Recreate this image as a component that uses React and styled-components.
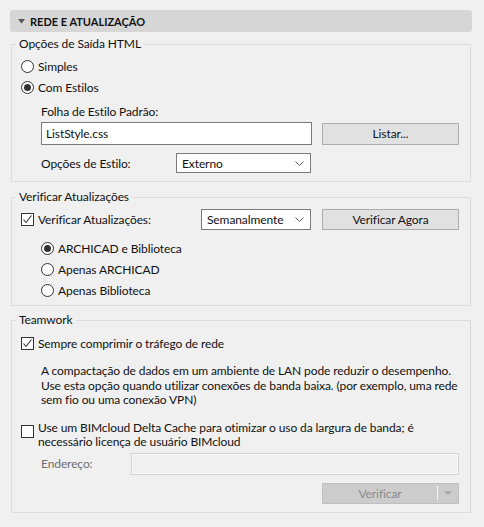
import React from 'react';
import styled, { createGlobalStyle } from 'styled-components';

const Global = createGlobalStyle`
  html, body { margin: 0; padding: 0; background: #f0f0f0; }
  body {
    font-family: Lato, "Noto Sans", sans-serif;
    font-size: 12px;
    letter-spacing: -0.1px;
    color: #111;
  }
  * { box-sizing: border-box; }
`;

const Panel = styled.div`
  width: 484px;
  height: 527px;
  padding: 10px 12px 0 10px;
  display: flex;
  flex-direction: column;
`;

const Header = styled.div`
  height: 22px;
  background: #d6d6d6;
  border-radius: 3px;
  display: flex;
  align-items: center;
  padding-left: 8px;
  gap: 5px;
  font-weight: 700;
  font-size: 11px;
  letter-spacing: 0;
  color: #111;
`;

const Group = styled.fieldset`
  margin: ${(p) => p.$top}px 1px 0;
  border: 1px solid #dcdcdc;
  padding: ${(p) => p.$pt}px 11px ${(p) => p.$pb}px 9px;
  min-width: 0;
  display: flex;
  flex-direction: column;
`;

const Legend = styled.legend`
  margin-left: -5px;
  padding: 0 3px;
  line-height: 16px;
  height: 16px;
`;

const Row = styled.div`
  display: flex;
  align-items: center;
  height: ${(p) => p.$h || 21}px;
  margin-top: ${(p) => p.$mt || 0}px;
  padding-left: ${(p) => p.$indent || 0}px;
  gap: ${(p) => p.$gap || 0}px;
`;

const Choice = styled.label`
  display: flex;
  align-items: center;
  gap: 4px;
  width: ${(p) => (p.$w ? `${p.$w}px` : 'auto')};
  flex-shrink: 0;
`;

const RadioMark = styled.span`
  width: 13px;
  height: 13px;
  border: 1px solid #333;
  border-radius: 50%;
  background: #fff;
  display: flex;
  align-items: center;
  justify-content: center;
  flex-shrink: 0;
  &::after {
    content: '';
    width: 7px;
    height: 7px;
    border-radius: 50%;
    background: ${(p) => (p.$on ? '#333' : 'transparent')};
  }
`;

const BoxMark = styled.span`
  width: 13px;
  height: 13px;
  border: 1px solid #333;
  background: #fff;
  flex-shrink: 0;
  display: flex;
  align-items: center;
  justify-content: center;
  margin-top: ${(p) => p.$mt || 0}px;
`;

const Caption = styled.div`
  height: 24px;
  padding: 2px 0 0 20px;
  display: flex;
  align-items: center;
`;

const TextInput = styled.div`
  width: ${(p) => p.$w}px;
  height: ${(p) => p.$h}px;
  border: 1px solid ${(p) => (p.$disabled ? '#d2d2d2' : '#7a7a7a')};
  background: ${(p) => (p.$disabled ? '#f0f0f0' : '#fff')};
  box-shadow: ${(p) => (p.$disabled ? 'inset 0 0 0 1px #fbfbfb' : 'none')};
  display: flex;
  align-items: center;
  padding-left: 4px;
  flex-shrink: 0;
`;

const Select = styled.div`
  width: ${(p) => p.$w}px;
  height: ${(p) => p.$h}px;
  border: 1px solid #7a7a7a;
  background: #fff;
  display: flex;
  align-items: center;
  justify-content: space-between;
  padding: 0 6px 0 5px;
  flex-shrink: 0;
`;

const Button = styled.div`
  width: 137px;
  height: ${(p) => p.$h || 22}px;
  border: 1px solid ${(p) => (p.$disabled ? '#bfbfbf' : '#adadad')};
  background: ${(p) => (p.$disabled ? '#cccccc' : '#e1e1e1')};
  color: ${(p) => (p.$disabled ? '#8a8a8a' : '#111')};
  display: flex;
  align-items: center;
  justify-content: center;
  flex-shrink: 0;
  margin-left: ${(p) => p.$ml || 0}px;
`;

const SplitButton = styled(Button)`
  justify-content: flex-start;
`;

const SplitLabel = styled.span`
  flex: 1;
  text-align: center;
`;

const SplitArrow = styled.span`
  width: 21px;
  height: 14px;
  border-left: 1px solid #f4f4f4;
  display: flex;
  align-items: center;
  justify-content: center;
`;

const Note = styled.p`
  margin: ${(p) => p.$mt}px 0 0;
  padding-left: 20px;
  line-height: 14.5px;
  white-space: nowrap;
`;

const Wrap = styled.div`
  display: flex;
  align-items: flex-start;
  gap: 4px;
  margin-top: ${(p) => p.$mt}px;
`;

const WrapText = styled.div`
  line-height: 14px;
  white-space: nowrap;
`;

const Muted = styled.span`
  color: #6d6d6d;
  width: 90px;
  flex-shrink: 0;
`;

const FieldLabel = styled.span`
  width: ${(p) => p.$w}px;
  flex-shrink: 0;
`;

const Chevron = () => (
  <svg width="9" height="5" viewBox="0 0 9 5">
    <path d="M0.5 0.5 L4.5 4.5 L8.5 0.5" fill="none" stroke="#555" strokeWidth="1" />
  </svg>
);

const Check = () => (
  <svg width="11" height="11" viewBox="0 0 11 11">
    <path d="M1.5 5.5 L4 8.5 L9.5 1.5" fill="none" stroke="#333" strokeWidth="1.1" />
  </svg>
);

const Radio = ({ on, children, w }) => (
  <Choice $w={w}>
    <RadioMark $on={on} />
    <span>{children}</span>
  </Choice>
);

const CheckBox = ({ on, children, w }) => (
  <Choice $w={w}>
    <BoxMark>{on && <Check />}</BoxMark>
    <span>{children}</span>
  </Choice>
);

export default function App() {
  return (
    <>
      <Global />
      <Panel>
        <Header>
          <svg width="7" height="5" viewBox="0 0 7 5">
            <path d="M0 0 H7 L3.5 4.5 Z" fill="#555" />
          </svg>
          <span>REDE E ATUALIZAÇÃO</span>
        </Header>

        <Group $top={4} $pt={4} $pb={8}>
          <Legend>Opções de Saída HTML</Legend>
          <Row>
            <Radio>Simples</Radio>
          </Row>
          <Row>
            <Radio on>Com Estilos</Radio>
          </Row>
          <Caption>Folha de Estilo Padrão:</Caption>
          <Row $h={23} $indent={20} $gap={10}>
            <TextInput $w={271} $h={23}>ListStyle.css</TextInput>
            <Button>Listar...</Button>
          </Row>
          <Row $h={20} $mt={8} $indent={20}>
            <FieldLabel $w={135}>Opções de Estilo:</FieldLabel>
            <Select $w={135} $h={20}>
              <span>Externo</span>
              <Chevron />
            </Select>
          </Row>
        </Group>

        <Group $top={7} $pt={3} $pb={4}>
          <Legend>Verificar Atualizações</Legend>
          <Row $h={22}>
            <CheckBox on w={180}>Verificar Atualizações:</CheckBox>
            <Select $w={110} $h={21}>
              <span>Semanalmente</span>
              <Chevron />
            </Select>
            <Button $h={21} $ml={11}>Verificar Agora</Button>
          </Row>
          <Row $mt={8} $indent={20}>
            <Radio on>ARCHICAD e Biblioteca</Radio>
          </Row>
          <Row $indent={20}>
            <Radio>Apenas ARCHICAD</Radio>
          </Row>
          <Row $indent={20}>
            <Radio>Apenas Biblioteca</Radio>
          </Row>
        </Group>

        <Group $top={6} $pt={4} $pb={8}>
          <Legend>Teamwork</Legend>
          <Row $h={22}>
            <CheckBox on>Sempre comprimir o tráfego de rede</CheckBox>
          </Row>
          <Note $mt={10}>
            A compactação de dados em um ambiente de LAN pode reduzir o desempenho.
            <br />
            Use esta opção quando utilizar conexões de banda baixa. (por exemplo, uma rede
            <br />
            sem fio ou uma conexão VPN)
          </Note>
          <Wrap $mt={13}>
            <BoxMark $mt={4} />
            <WrapText>
              Use um BIMcloud Delta Cache para otimizar o uso da largura de banda; é
              <br />
              necessário licença de usuário BIMcloud
            </WrapText>
          </Wrap>
          <Row $h={22} $mt={4} $indent={20}>
            <Muted>Endereço:</Muted>
            <TextInput $w={328} $h={22} $disabled />
          </Row>
          <Row $h={21} $mt={8} $indent={301}>
            <SplitButton $h={21} $disabled>
              <SplitLabel>Verificar</SplitLabel>
              <SplitArrow>
                <svg width="8" height="4" viewBox="0 0 8 4">
                  <path d="M0 0 H8 L4 4 Z" fill="#a8a8a8" />
                </svg>
              </SplitArrow>
            </SplitButton>
          </Row>
        </Group>
      </Panel>
    </>
  );
}
